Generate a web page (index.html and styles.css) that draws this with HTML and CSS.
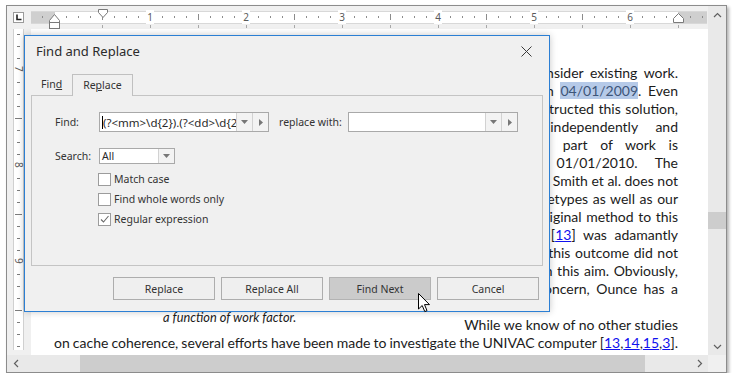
FILE: index.html
```html
<!DOCTYPE html>
<html lang="en">
<head>
  <meta charset="UTF-8" />
  <title>Find and Replace</title>
  <meta name="viewport" content="width=device-width, initial-scale=1.0" />
  <link rel="stylesheet" href="styles.css">
</head>
<body>

<div class="editor">

  <div class="workspace">
    <div class="ruler-bar">
      <div class="tab-kind">
        <svg width="9" height="9" viewBox="0 0 9 9"><path d="M3 1.5 V6.5 H7.5" fill="none" stroke="#222" stroke-width="1.6"/></svg>
      </div>
      <div class="hruler-wrap">
        <div class="hruler">
          <div class="hnums"><span><b>1</b></span><span><b>2</b></span><span><b>3</b></span><span><b>4</b></span><span><b>5</b></span><span><b>6</b></span></div>
        </div>
        <div class="tabstops"></div>
        <svg class="marker left-indent" width="11" height="16" viewBox="0 0 11 16">
          <path d="M0.5 7.5 L5.5 1.5 L10.5 7.5 V9.5 H0.5 Z" fill="#fff" stroke="#7a7a7a"/>
          <rect x="0.5" y="9.5" width="10" height="6" fill="#fff" stroke="#7a7a7a"/>
        </svg>
        <svg class="marker first-indent" width="10" height="10" viewBox="0 0 10 10">
          <path d="M0.5 0.5 H9.5 V3.5 L5 8.5 L0.5 3.5 Z" fill="#fff" stroke="#7a7a7a"/>
        </svg>
        <svg class="marker right-indent" width="11" height="10" viewBox="0 0 11 10">
          <path d="M0.5 9.5 V5.5 L5.5 0.5 L10.5 5.5 V9.5 Z" fill="#fff" stroke="#7a7a7a"/>
        </svg>
      </div>
    </div>

    <div class="doc-area">
      <div class="vcol">
        <div class="vruler">
          <div class="vnums"><span>7</span><span>8</span><span>9</span></div>
        </div>
      </div>
      <div class="page">
        <div class="text">
          <div class="line gap-s">consider existing work.</div>
          <div class="line gap-s">on <span class="sel">04/01/2009</span>. Even</div>
          <div class="line gap-xs">constructed this solution,</div>
          <div class="line gap-xl">independently and</div>
          <div class="line gap-l">part of work is</div>
          <div class="line gap-xl">01/01/2010. The</div>
          <div class="line">J. Smith et al. does not</div>
          <div class="line gap-xs">archetypes as well as our</div>
          <div class="line gap-xs">original method to this</div>
          <div class="line gap-sm">[<a href="#">13</a>] was adamantly</div>
          <div class="line gap-xs">this outcome did not</div>
          <div class="line gap-xs">with this aim. Obviously,</div>
          <div class="line gap-s">concern, Ounce has a</div>
          <div class="line"></div>
          <div class="fig-row">
            <span class="caption">a function of work factor.</span>
            <span>While we know of no other studies</span>
          </div>
          <div class="line justify">on cache coherence, several efforts have been made to investigate the UNIVAC computer [<a href="#">13</a>,<a href="#">14</a>,<a href="#">15</a>,<a href="#">3</a>].</div>
        </div>
      </div>
    </div>
  </div>

  <div class="vscroll">
    <div class="sbtn"><svg width="9" height="6" viewBox="0 0 9 6"><path d="M1 5 L4.5 1.5 L8 5" fill="none" stroke="#606060" stroke-width="1.2"/></svg></div>
    <div class="vtrack"><div class="vthumb"></div></div>
    <div class="sbtn"><svg width="9" height="6" viewBox="0 0 9 6"><path d="M1 1 L4.5 4.5 L8 1" fill="none" stroke="#606060" stroke-width="1.2"/></svg></div>
  </div>

  <div class="hscroll">
    <div class="sbtn"><svg width="6" height="9" viewBox="0 0 6 9"><path d="M5 1 L1.5 4.5 L5 8" fill="none" stroke="#606060" stroke-width="1.2"/></svg></div>
    <div class="htrack"><div class="hthumb"></div></div>
    <div class="sbtn"><svg width="6" height="9" viewBox="0 0 6 9"><path d="M1 1 L4.5 4.5 L1 8" fill="none" stroke="#606060" stroke-width="1.2"/></svg></div>
  </div>

  <div class="corner"></div>

  <!-- Find and Replace dialog -->
  <div class="dialog">
    <div class="dlg-head">
      <span class="dlg-title">Find and Replace</span>
      <svg width="11" height="11" viewBox="0 0 11 11"><path d="M0.5 0.5 L10.5 10.5 M10.5 0.5 L0.5 10.5" stroke="#3a3a3a" stroke-width="1"/></svg>
    </div>

    <div class="tabs">
      <div class="tab">Fin<u>d</u></div>
      <div class="tab active">Re<u>p</u>lace</div>
    </div>

    <div class="panel">
      <div class="row">
        <span class="lbl lbl-find">Find:</span>
        <div class="combo wide">
          <div class="val"><i class="caret"></i><span class="clip">(?&lt;mm&gt;\d{2}).(?&lt;dd&gt;\d{2})</span></div>
          <div class="drop"><svg width="7" height="4" viewBox="0 0 7 4"><path d="M0 0 H7 L3.5 4 Z" fill="#777"/></svg></div>
          <div class="drop"><svg width="4" height="7" viewBox="0 0 4 7"><path d="M0 0 V7 L4 3.5 Z" fill="#777"/></svg></div>
        </div>
        <span class="lbl lbl-replace">replace with:</span>
        <div class="combo wide">
          <div class="val"></div>
          <div class="drop"><svg width="7" height="4" viewBox="0 0 7 4"><path d="M0 0 H7 L3.5 4 Z" fill="#777"/></svg></div>
          <div class="drop"><svg width="4" height="7" viewBox="0 0 4 7"><path d="M0 0 V7 L4 3.5 Z" fill="#777"/></svg></div>
        </div>
      </div>

      <div class="row row-search">
        <span class="lbl lbl-find">Search:</span>
        <div class="combo small">
          <div class="val">All</div>
          <div class="drop"><svg width="7" height="4" viewBox="0 0 7 4"><path d="M0 0 H7 L3.5 4 Z" fill="#777"/></svg></div>
        </div>
      </div>

      <div class="checks">
        <label class="check"><span class="box"></span>Match case</label>
        <label class="check"><span class="box"></span>Find whole words only</label>
        <label class="check"><span class="box"><svg width="11" height="11" viewBox="0 0 11 11"><path d="M2 5.5 L4.5 8 L9.5 2" fill="none" stroke="#6a6a6a" stroke-width="1.1"/></svg></span>Regular expression</label>
      </div>
    </div>

    <div class="buttons">
      <button>Replace</button>
      <button>Replace All</button>
      <button class="hover">Find Next</button>
      <button>Cancel</button>
    </div>
  </div>

  <svg class="pointer" width="13" height="20" viewBox="0 0 13 20">
    <path d="M0.5 0.5 V16 L4.2 12.5 L6.8 18.6 L9 17.6 L6.5 11.6 H11.5 Z" fill="#fff" stroke="#000" stroke-width="1" stroke-linejoin="round"/>
  </svg>
</div>

</body>
</html>
```

FILE: styles.css
```css
body {
  margin: 0;
  background: #fff;
  font-family: "Noto Sans", "Open Sans", sans-serif;
}

.editor {
  position: relative;
  margin: 5px 0 0 6px;
  width: 719px;
  height: 366px;
  border: 1px solid #8c8c8c;
  box-shadow: 2px 2px 3px rgba(0,0,0,0.3);
  background: #f0f0f0;
  display: grid;
  grid-template-columns: 701px 18px;
  grid-template-rows: 349px 17px;
}

/* ruler */
.workspace {
  display: flex;
  flex-direction: column;
  min-height: 0;
}

.ruler-bar {
  height: 23px;
  flex-shrink: 0;
  display: flex;
}

.tab-kind {
  margin: 6px 0 0 6px;
  width: 9px;
  height: 9px;
  border: 1px solid #9a9a9a;
  background: #fff;
}

.tab-kind svg {
  display: block;
}

.hruler-wrap {
  position: relative;
  margin: 5px 0 0 7px;
  width: 676px;
}

.hruler {
  height: 11px;
  border-top: 1px solid #d8d8d8;
  border-bottom: 1px solid #d8d8d8;
  background:
    repeating-linear-gradient(to right, transparent 0 11px, #8c8c8c 11px 12px) 0 4px / 100% 2px no-repeat,
    repeating-linear-gradient(to right, transparent 0 71px, #8c8c8c 71px 72px, transparent 72px 96px) 0 2px / 100% 6px no-repeat,
    linear-gradient(to right, #cfcfcf 0 24px, #fff 24px 647px, #cfcfcf 647px);
}

.hnums {
  display: flex;
  padding-left: 71px;
  font-size: 10px;
  line-height: 11px;
  color: #5a5a5a;
}

.hnums span {
  width: 96px;
  text-align: center;
}

.hnums b {
  font-weight: normal;
  background: #fff;
  padding: 0 1px;
}

.tabstops {
  height: 3px;
  margin-top: 1px;
  background: repeating-linear-gradient(to right, transparent 0 23px, #a8a8a8 23px 24px, transparent 24px 48px);
}

.marker {
  position: absolute;
  display: block;
}

.left-indent { left: 18px; top: 2px; }
.first-indent { left: 67px; top: -2px; }
.right-indent { left: 642px; top: 2px; }

.doc-area {
  flex: 1;
  display: flex;
  min-height: 0;
}

.vcol {
  width: 24px;
  flex-shrink: 0;
}

.vruler {
  margin-left: 6px;
  width: 9px;
  height: 321px;
  border-left: 1px solid #d0d0d0;
  border-right: 1px solid #d0d0d0;
  background:
    repeating-linear-gradient(to bottom, transparent 0 5px, #7c7c7c 5px 6px, transparent 6px 12px) 3px 0 / 3px 100% no-repeat,
    repeating-linear-gradient(to bottom, transparent 0 89px, #7c7c7c 89px 90px, transparent 90px 96px) 1px 0 / 7px 100% no-repeat,
    #fff;
}

.vnums {
  display: flex;
  flex-direction: column;
  align-items: center;
  gap: 82px;
  padding-top: 37px;
  font-size: 10px;
  color: #5a5a5a;
}

.vnums span {
  height: 14px;
  line-height: 9px;
  writing-mode: vertical-rl;
  background: #fff;
}

/* document */
.page {
  flex: 1;
  background: #fff;
  overflow: hidden;
}

.text {
  margin-left: 23px;
  width: 624px;
  padding-top: 35px;
  font-family: Lato, "Liberation Sans", sans-serif;
  font-size: 14px;
  color: #1b1b1b;
}

.line {
  height: 18px;
  line-height: 18px;
  white-space: nowrap;
  text-align: right;
}

.gap-xs { word-spacing: 1px; }
.gap-s { word-spacing: 3px; }
.gap-sm { word-spacing: 4px; }
.gap-l { word-spacing: 9px; }
.gap-xl { word-spacing: 14px; }

.line.justify {
  text-align: justify;
  text-align-last: justify;
  white-space: normal;
  word-spacing: -2px;
}

a {
  color: #1111ee;
}

.sel {
  background: #b6cae8;
  color: #3d5578;
}

.fig-row {
  height: 18px;
  line-height: 18px;
  display: flex;
  justify-content: space-between;
  align-items: flex-start;
}

.caption {
  margin: -8px 0 0 109px;
  font-style: italic;
  font-size: 12.8px;
}

/* scrollbars */
.vscroll, .hscroll {
  background: #e9e9e9;
  display: flex;
}

.vscroll {
  flex-direction: column;
}

.sbtn {
  flex: 0 0 17px;
  display: flex;
  align-items: center;
  justify-content: center;
}

.vtrack, .htrack {
  flex: 1;
}

.vthumb {
  margin-top: 189px;
  height: 17px;
  background: #cdcdcd;
}

.htrack {
  display: flex;
}

.hthumb {
  margin-left: 56px;
  width: 565px;
  background: #cdcdcd;
}

.corner {
  background: #f0f0f0;
}

/* dialog */
.dialog {
  position: absolute;
  left: 17px;
  top: 29px;
  width: 526px;
  height: 277px;
  box-sizing: border-box;
  border: 1px solid #2b7fd4;
  background: #f0f0f0;
  box-shadow: 0 0 7px rgba(0,0,0,0.22);
  color: #333;
  font-size: 10.5px;
  display: flex;
  flex-direction: column;
}

.dlg-head {
  height: 30px;
  display: flex;
  justify-content: space-between;
  align-items: center;
  padding: 0 17px 0 11px;
}

.dlg-title {
  font-size: 13px;
  color: #2b2b2b;
}

.tabs {
  display: flex;
  margin: 8px 0 -1px 6px;
  position: relative;
  z-index: 1;
}

.tab {
  height: 22px;
  line-height: 21px;
  padding: 0 10px;
  box-sizing: border-box;
}

.tab.active {
  border: 1px solid #c0c0c0;
  border-bottom: none;
  background: #f0f0f0;
}

.panel {
  margin: 0 6px;
  height: 171px;
  box-sizing: border-box;
  border: 1px solid #c4c4c4;
  padding: 16px 0 0 23px;
}

.row {
  display: flex;
  align-items: center;
}

.row-search {
  margin-top: 16px;
}

.lbl-find {
  width: 44px;
}

.lbl-replace {
  width: 69px;
  margin-left: 10px;
}

.combo {
  display: flex;
  box-sizing: border-box;
  border: 1px solid #a9a9a9;
  background: #fff;
}

.combo.wide {
  width: 170px;
  height: 20px;
}

.combo.small {
  width: 76px;
  height: 16px;
}

.combo .val {
  flex: 1;
  min-width: 0;
  overflow: hidden;
  white-space: nowrap;
  padding-left: 2px;
  color: #2a2a2a;
  display: flex;
  align-items: center;
}

.combo.wide .val {
  font-size: 11.5px;
}

.val .clip {
  min-width: 0;
  overflow: hidden;
}

.caret {
  display: inline-block;
  width: 0;
  height: 13px;
  border-left: 1px solid #000;
}

.combo .drop {
  width: 15px;
  flex-shrink: 0;
  border-left: 1px solid #d2d2d2;
  background: #f3f3f3;
  display: flex;
  align-items: center;
  justify-content: center;
}

.checks {
  margin: 9px 0 0 43px;
  display: flex;
  flex-direction: column;
}

.check {
  height: 20px;
  display: flex;
  align-items: flex-start;
  line-height: 13px;
}

.check .box {
  width: 13px;
  height: 13px;
  box-sizing: border-box;
  border: 1px solid #9c9c9c;
  background: #fff;
  margin-right: 3px;
  display: flex;
  align-items: center;
  justify-content: center;
}

.buttons {
  display: flex;
  justify-content: flex-end;
  gap: 6px;
  margin: 11px 10px 0 0;
}

.buttons button {
  width: 102px;
  height: 23px;
  border: 1px solid #adadad;
  background: #efefef;
  font-family: inherit;
  font-size: 10.5px;
  color: #333;
  padding: 0;
}

.buttons button.hover {
  background: #cbcbcb;
  border-color: #b3b3b3;
}

.pointer {
  position: absolute;
  left: 411px;
  top: 287px;
}
```
